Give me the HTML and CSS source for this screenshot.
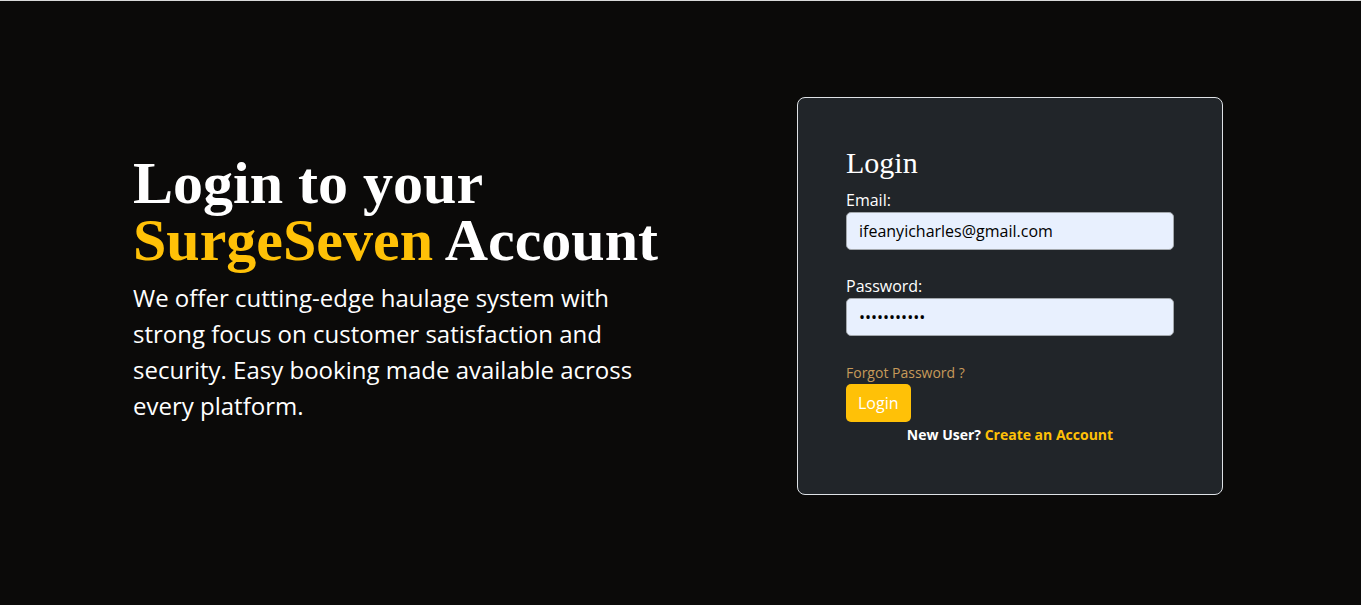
FILE: index.html
```html
<!DOCTYPE html>
<html lang="en">
<head>
<meta charset="utf-8">
<title>Login - SurgeSeven</title>
<link rel="stylesheet" href="styles.css">
</head>
<body>
<main class="page">
  <section class="intro">
    <h1 class="intro-title">Login to your <span class="brand">SurgeSeven</span> Account</h1>
    <p class="intro-text">We offer cutting-edge haulage system with strong focus on customer satisfaction and security. Easy booking made available across every platform.</p>
  </section>
  <section class="card">
    <h2 class="card-title">Login</h2>
    <form class="form">
      <label class="label" for="email">Email:</label>
      <input class="input" id="email" type="email" value="ifeanyicharles@gmail.com">
      <label class="label label-pass" for="password">Password:</label>
      <input class="input" id="password" type="password" value="ifeanyi1234">
      <a class="forgot" href="#">Forgot Password ?</a>
      <button class="btn" type="button">Login</button>
      <p class="signup">New User? <a href="#">Create an Account</a></p>
    </form>
  </section>
</main>
</body>
</html>
```
FILE: styles.css
```css
* { box-sizing: border-box; }
html, body { margin: 0; padding: 0; }
body {
  background: #0b0a09;
  border-top: 1px solid #d9d9d9;
  font-family: "Open Sans", "Liberation Sans", sans-serif;
  color: #fff;
}
.page {
  height: 604px;
  display: flex;
  align-items: flex-start;
  padding-left: 133px;
}
.intro {
  width: 545px;
  margin-top: 154px;
}
.intro-title {
  margin: 0 0 11px;
  font-family: "Liberation Serif", serif;
  font-weight: 700;
  font-size: 60px;
  line-height: 57px;
}
.brand { color: #ffc107; }
.intro-text {
  margin: 0;
  font-size: 24px;
  line-height: 36px;
}
.card {
  margin-left: 119px;
  margin-top: 96px;
  width: 426px;
  height: 398px;
  background: #212529;
  border: 1px solid #dee2e6;
  border-radius: 8px;
  padding: 47px 48px 48px;
}
.card-title {
  margin: 0 0 7px;
  font-family: "Liberation Serif", serif;
  font-weight: 400;
  font-size: 30px;
  line-height: 36px;
}
.form {
  display: flex;
  flex-direction: column;
  align-items: flex-start;
}
.label {
  font-size: 16px;
  line-height: 24px;
}
.label-pass { margin-top: 24px; }
.input {
  width: 328px;
  height: 38px;
  background: #e8f0fe;
  border: 1px solid #a3a8ad;
  border-radius: 5px;
  padding: 6px 12px;
  font-family: "Open Sans", "Liberation Sans", sans-serif;
  font-size: 16px;
  color: #000;
}
.forgot {
  margin-top: 27px;
  font-size: 14px;
  line-height: 20px;
  color: #c69a5a;
  text-decoration: none;
}
.btn {
  margin-top: 1px;
  height: 38px;
  padding: 0 12px;
  background: #ffc107;
  border: 0;
  border-radius: 5px;
  color: #fff;
  font-family: "Open Sans", "Liberation Sans", sans-serif;
  font-size: 16px;
}
.signup {
  align-self: stretch;
  text-align: center;
  margin: 3px 0 0;
  font-size: 14px;
  font-weight: 700;
  line-height: 20px;
}
.signup a { color: #ffc107; text-decoration: none; }
```
